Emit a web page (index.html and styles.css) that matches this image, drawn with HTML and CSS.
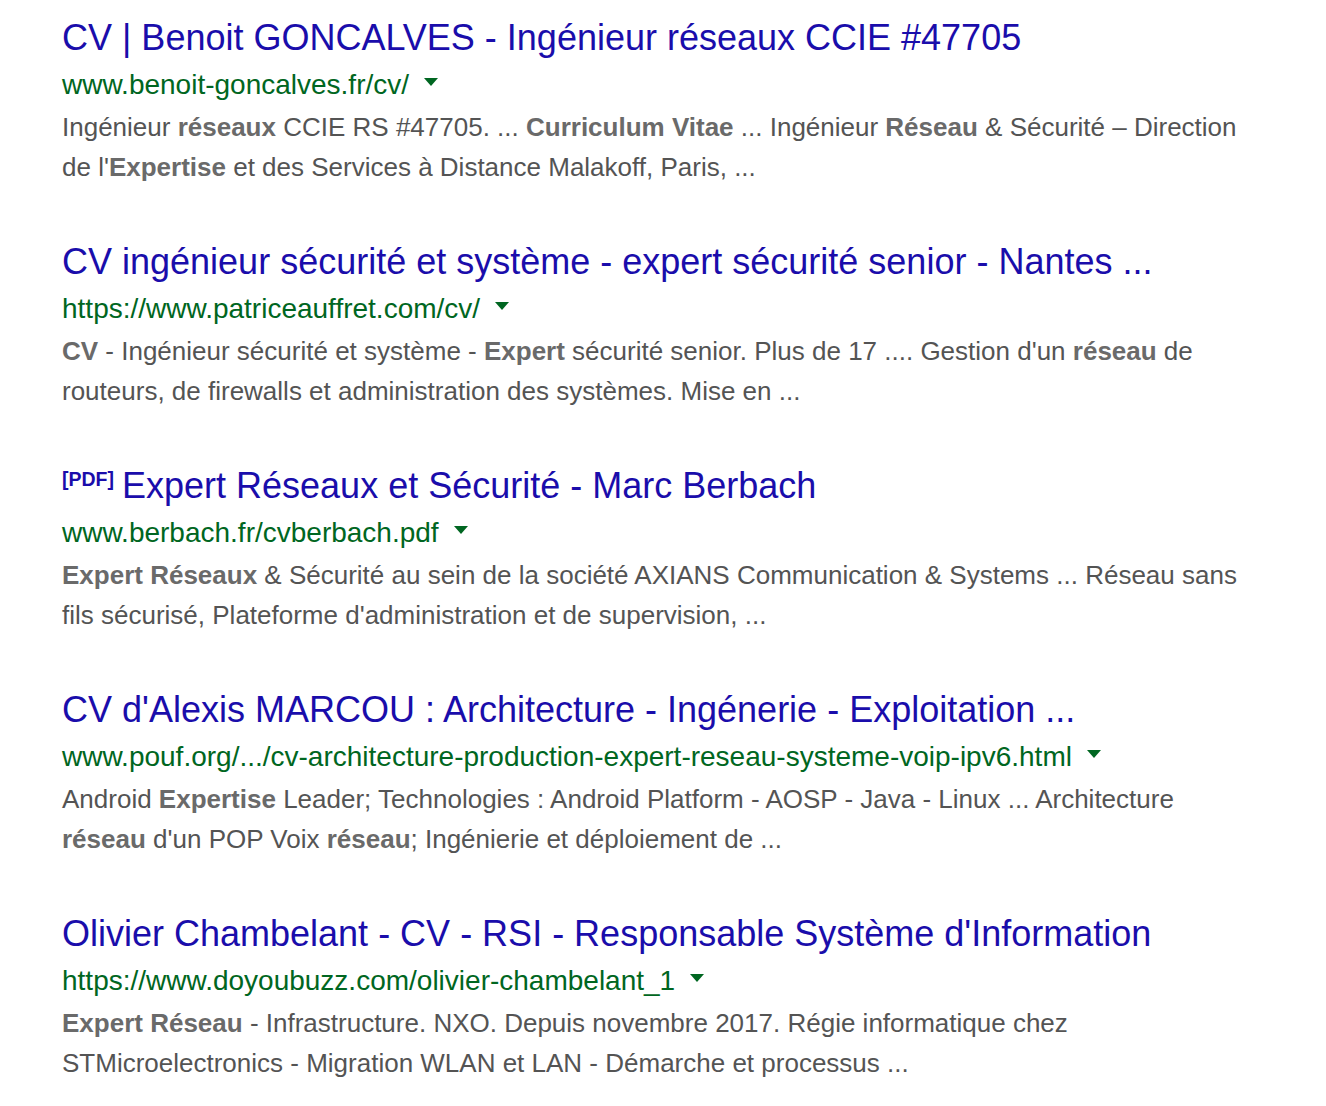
FILE: index.html
```html
<!DOCTYPE html>
<html lang="fr">
<head>
<meta charset="utf-8">
<title>Résultats</title>
<link rel="stylesheet" href="styles.css">
</head>
<body>
<div class="results">
  <div class="result">
    <h3 class="title"><a href="#">CV | Benoit GONCALVES - Ingénieur réseaux CCIE #47705</a></h3>
    <div class="url"><cite>www.benoit-goncalves.fr/cv/</cite><span class="arrow"></span></div>
    <div class="snippet">Ingénieur <b>réseaux</b> CCIE RS #47705. ... <b>Curriculum Vitae</b> ... Ingénieur <b>Réseau</b> &amp; Sécurité – Direction de l'<b>Expertise</b> et des Services à Distance Malakoff, Paris, ...</div>
  </div>
  <div class="result">
    <h3 class="title"><a href="#">CV ingénieur sécurité et système - expert sécurité senior - Nantes ...</a></h3>
    <div class="url"><cite>https://www.patriceauffret.com/cv/</cite><span class="arrow"></span></div>
    <div class="snippet"><b>CV</b> - Ingénieur sécurité et système - <b>Expert</b> sécurité senior. Plus de 17 .... Gestion d'un <b>réseau</b> de routeurs, de firewalls et administration des systèmes. Mise en ...</div>
  </div>
  <div class="result">
    <h3 class="title"><span class="pdf">[PDF]</span><a href="#">Expert Réseaux et Sécurité - Marc Berbach</a></h3>
    <div class="url"><cite>www.berbach.fr/cvberbach.pdf</cite><span class="arrow"></span></div>
    <div class="snippet"><b>Expert Réseaux</b> &amp; Sécurité au sein de la société AXIANS Communication &amp; Systems ... Réseau sans fils sécurisé, Plateforme d'administration et de supervision, ...</div>
  </div>
  <div class="result">
    <h3 class="title"><a href="#">CV d'Alexis MARCOU : Architecture - Ingénerie - Exploitation ...</a></h3>
    <div class="url"><cite>www.pouf.org/.../cv-architecture-production-expert-reseau-systeme-voip-ipv6.html</cite><span class="arrow"></span></div>
    <div class="snippet">Android <b>Expertise</b> Leader; Technologies : Android Platform - AOSP - Java - Linux ... Architecture <b>réseau</b> d'un POP Voix <b>réseau</b>; Ingénierie et déploiement de ...</div>
  </div>
  <div class="result">
    <h3 class="title"><a href="#">Olivier Chambelant - CV - RSI - Responsable Système d'Information</a></h3>
    <div class="url"><cite>https://www.doyoubuzz.com/olivier-chambelant_1</cite><span class="arrow"></span></div>
    <div class="snippet"><b>Expert Réseau</b> - Infrastructure. NXO. Depuis novembre 2017. Régie informatique chez STMicroelectronics - Migration WLAN et LAN - Démarche et processus ...</div>
  </div>
</div>
</body>
</html>
```
FILE: styles.css
```css
html, body {
  margin: 0;
  padding: 0;
  background: #ffffff;
}

body {
  font-family: "Liberation Sans", Arial, sans-serif;
}

.results {
  padding: 12px 0 0 62px;
  width: 1180px;
  display: flex;
  flex-direction: column;
  gap: 49px;
}

.result {
  display: flex;
  flex-direction: column;
}

.title {
  margin: 0;
  font-size: 36px;
  font-weight: normal;
  line-height: 52px;
  white-space: nowrap;
}

.title a {
  color: #1a0dab;
  text-decoration: none;
}

.pdf {
  color: #1a0dab;
  font-weight: bold;
  font-size: 19.5px;
  line-height: 0;
  vertical-align: 12px;
  margin-right: 8px;
}

.url {
  display: flex;
  align-items: center;
  margin-top: 1px;
  font-size: 28px;
  line-height: 40px;
  height: 40px;
  white-space: nowrap;
}

.url cite {
  font-style: normal;
  color: #006621;
}

.arrow {
  width: 0;
  height: 0;
  margin-left: 15px;
  margin-top: -6px;
  border-left: 7px solid transparent;
  border-right: 7px solid transparent;
  border-top: 8px solid #006621;
}

.snippet {
  margin-top: 2px;
  font-size: 26px;
  line-height: 40px;
  color: #545454;
  width: 1180px;
}

.snippet b {
  color: #6a6a6a;
}
```
